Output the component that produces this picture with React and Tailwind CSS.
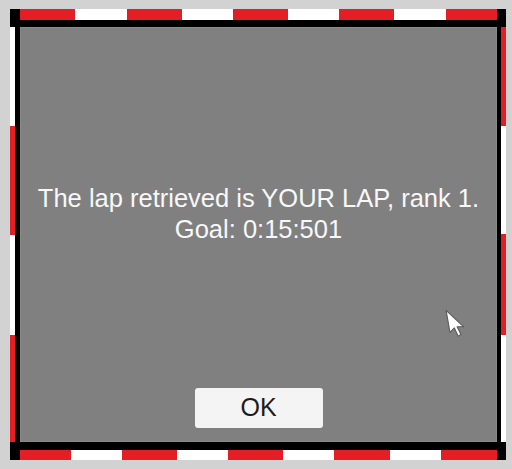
import React from 'react';

// Lap result dialog framed by a red/white kerb stripe.
const RED = 'bg-[#e31e25]';
const WHITE = 'bg-white';

const TOP = [
  `w-[55px] ${RED}`, `w-[52px] ${WHITE}`, `w-[55px] ${RED}`, `w-[51px] ${WHITE}`, `w-[55px] ${RED}`,
  `w-[51px] ${WHITE}`, `w-[55px] ${RED}`, `w-[52px] ${WHITE}`, `w-[51px] ${RED}`,
];
const BOTTOM = [
  `w-[51px] ${RED}`, `w-[51px] ${WHITE}`, `w-[55px] ${RED}`, `w-[51px] ${WHITE}`, `w-[55px] ${RED}`,
  `w-[51px] ${WHITE}`, `w-[56px] ${RED}`, `w-[51px] ${WHITE}`, `w-[56px] ${RED}`,
];
const LEFT = [`h-[99px] ${WHITE}`, `h-[109px] ${RED}`, `h-[100px] ${WHITE}`, `h-[107px] ${RED}`];
const RIGHT = [`h-[99px] ${RED}`, `h-[108px] ${WHITE}`, `h-[101px] ${RED}`, `h-[107px] ${WHITE}`];

function Cursor() {
  return (
    <svg className="absolute left-[424px] top-[281px]" width="22" height="29" viewBox="-1 -1 20 26">
      <polygon
        points="0,0 3.5,20 7.5,16 11,23.5 13.5,22 10,15 16,15"
        fill="#fff"
        stroke="#5a5a5a"
        strokeWidth="1"
        strokeLinejoin="round"
      />
    </svg>
  );
}

export default function App() {
  return (
    <div className="w-[512px] h-[469px] bg-[#d2d2d2] pt-[9px] pl-[10px] font-['Liberation_Sans',Arial,sans-serif]">
      <div className="w-[496px] h-[451px] bg-black flex flex-col">
        <div className="h-[11px] flex pl-[10px]">
          {TOP.map((c, i) => <div key={i} className={c} />)}
        </div>
        <div className="h-[7px]" />
        <div className="h-[415px] flex">
          <div className="w-[5px] flex flex-col">
            {LEFT.map((c, i) => <div key={i} className={c} />)}
          </div>
          <div className="w-[5px]" />
          <div className="relative w-[477px] bg-[#808080] border border-[#898989] flex flex-col items-center pt-[155px] pb-[13px]">
            <div className="text-[25.5px] leading-[31px] text-[#f8f8f8] text-center">
              <div>The lap retrieved is YOUR LAP, rank 1.</div>
              <div>Goal: 0:15:501</div>
            </div>
            <button className="mt-auto w-[128px] h-[40px] bg-[#f4f4f4] rounded-[3px] text-[25px] text-[#1c1c1c] flex items-center justify-center">
              OK
            </button>
            <Cursor />
          </div>
          <div className="w-[4px]" />
          <div className="w-[5px] flex flex-col">
            {RIGHT.map((c, i) => <div key={i} className={c} />)}
          </div>
        </div>
        <div className="h-[8px]" />
        <div className="h-[10px] flex pl-[10px]">
          {BOTTOM.map((c, i) => <div key={i} className={c} />)}
        </div>
      </div>
    </div>
  );
}
